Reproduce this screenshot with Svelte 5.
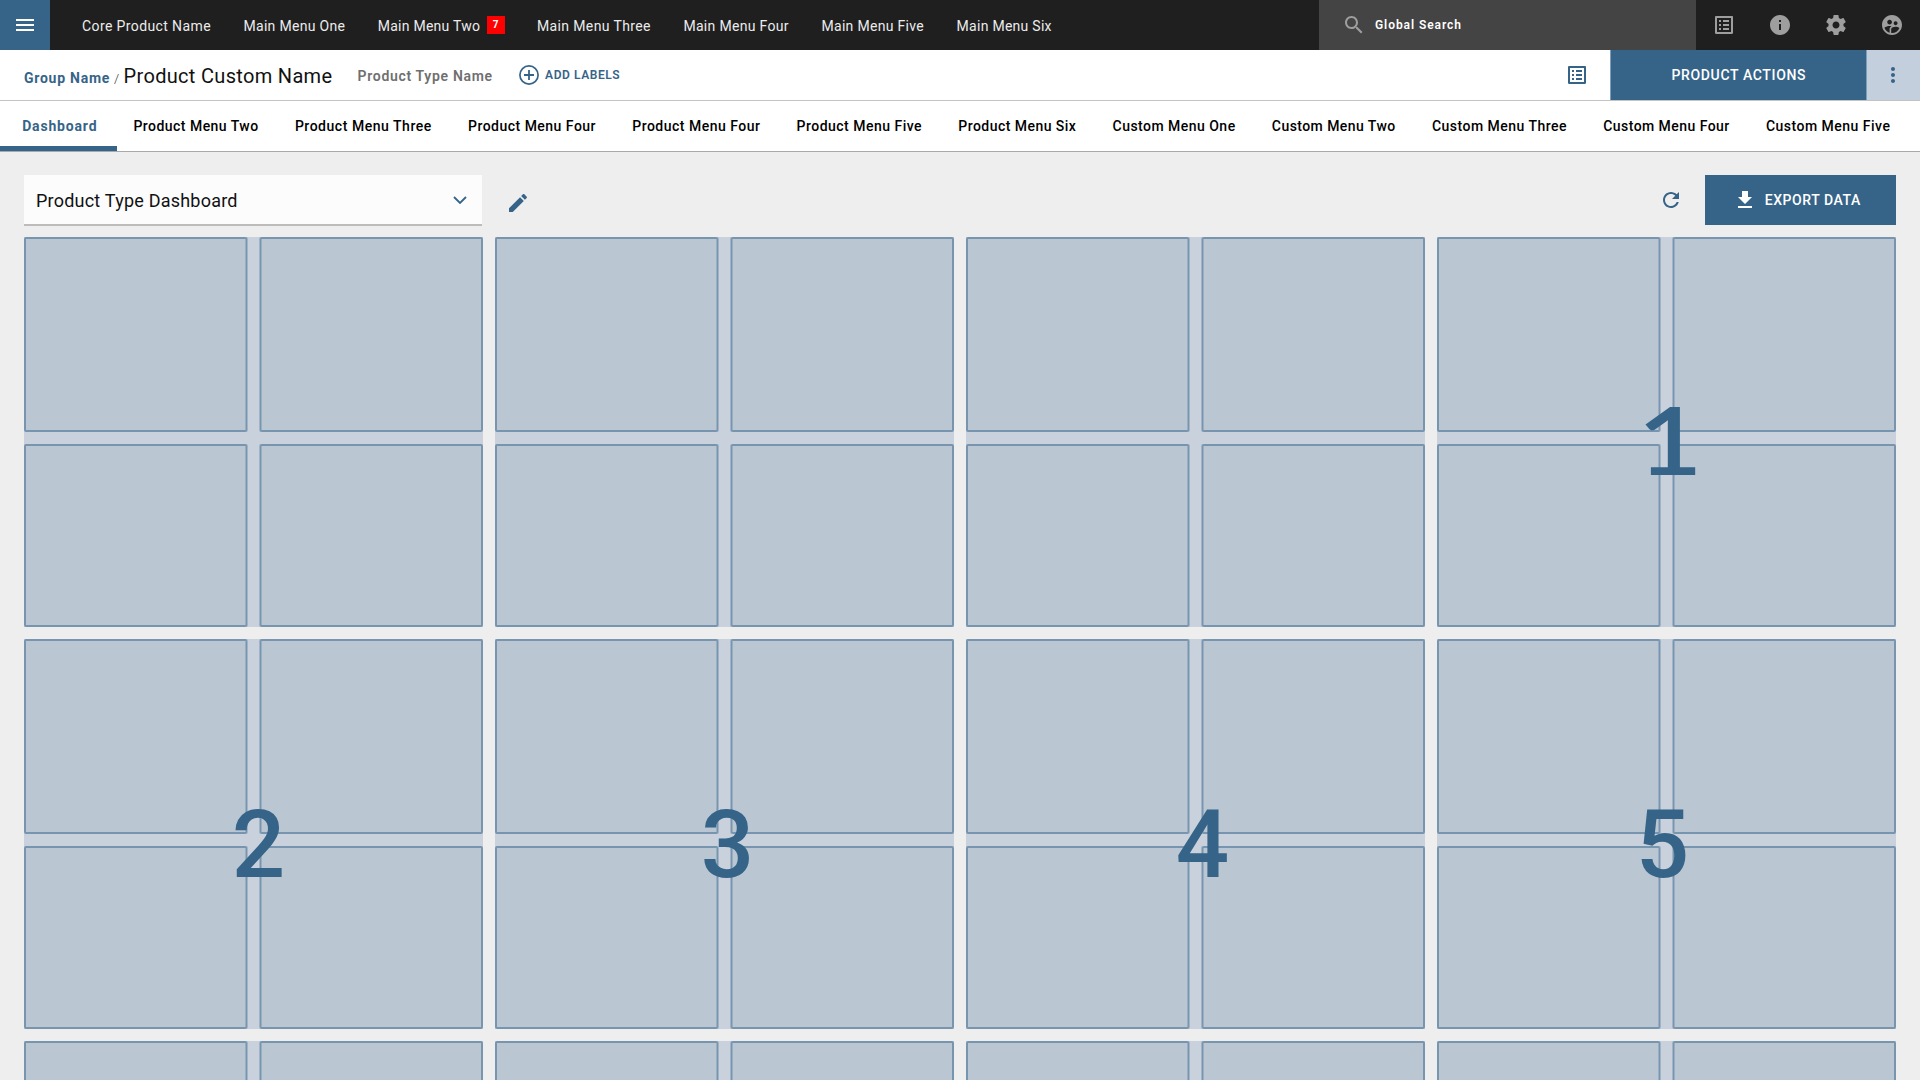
<script lang="ts">
  const mainMenu = [
    { label: 'Core Product Name', width: 128.6 },
    { label: 'Main Menu One', width: 101.4 },
    { label: 'Main Menu Two', width: 102.2, badge: '7' },
    { label: 'Main Menu Three', width: 113.6 },
    { label: 'Main Menu Four', width: 105.2 },
    { label: 'Main Menu Five', width: 102.2 },
    { label: 'Main Menu Six', width: 95 },
  ];

  const tabs = [
    { label: 'Dashboard', width: 74.4, active: true },
    { label: 'Product Menu Two', width: 124.8 },
    { label: 'Product Menu Three', width: 136.4 },
    { label: 'Product Menu Four', width: 127.6 },
    { label: 'Product Menu Four', width: 127.6 },
    { label: 'Product Menu Five', width: 125 },
    { label: 'Product Menu Six', width: 117.6 },
    { label: 'Custom Menu One', width: 122.6 },
    { label: 'Custom Menu Two', width: 123.4 },
    { label: 'Custom Menu Three', width: 134.6 },
    { label: 'Custom Menu Four', width: 126 },
    { label: 'Custom Menu Five', width: 124 },
  ];

  const groups = ['', '', '', '1', '2', '3', '4', '5', '', '', '', ''];

  // Tracks the label's letters out so the text fills the given width.
  function fit(node: HTMLElement, width: number) {
    const glyphs = (node.textContent ?? '').length;
    const natural = node.getBoundingClientRect().width;
    const spacing = (width - natural) / (glyphs - 1);
    node.style.letterSpacing = `${spacing}px`;
    node.style.marginRight = `${-spacing}px`;
  }
</script>

{#snippet listIcon()}
  <svg class="icon" viewBox="0 0 24 24"><path d="M19 5v14H5V5h14m1.1-2H3.9c-.5 0-.9.4-.9.9v16.2c0 .4.4.9.9.9h16.2c.4 0 .9-.5.9-.9V3.900c0-.5-.5-.9-.9-.9zM11 7h6v2h-6V7zm0 4h6v2h-6v-2zm0 4h6v2h-6zM7 7h2v2H7zm0 4h2v2H7zm0 4h2v2H7z" /></svg>
{/snippet}

<div class="page">
  <header class="topbar">
    <button class="burger" aria-label="Menu">
      <svg class="icon" viewBox="0 0 24 24"><path d="M3 18h18v-2H3v2zm0-5h18v-2H3v2zm0-7v2h18V6H3z" /></svg>
    </button>
    <nav class="main-menu">
      {#each mainMenu as item}
        <a class="main-item" href="#top">
          <span use:fit={item.width}>{item.label}</span>
          {#if item.badge}<b class="badge">{item.badge}</b>{/if}
        </a>
      {/each}
    </nav>
    <div class="search">
      <svg class="icon" viewBox="0 0 24 24"><path d="M15.5 14h-.79l-.28-.27C15.410 12.590 16 11.110 16 9.500 16 5.910 13.090 3 9.500 3S3 5.910 3 9.500 5.910 16 9.500 16c1.610 0 3.090-.59 4.230-1.570l.27.28v.79l5 4.990L20.490 19l-4.990-5zm-6 0C7.010 14 5 11.990 5 9.500S7.010 5 9.500 5 14 7.010 14 9.500 11.990 14 9.500 14z" /></svg>
      <span use:fit={86}>Global Search</span>
    </div>
    <div class="tools">
      {@render listIcon()}
      <svg class="icon" viewBox="0 0 24 24"><path d="M12 2C6.480 2 2 6.480 2 12s4.480 10 10 10 10-4.480 10-10S17.520 2 12 2zm1 15h-2v-6h2v6zm0-8h-2V7h2v2z" /></svg>
      <svg class="icon" viewBox="0 0 24 24"><path d="M19.430 12.980c.04-.32.07-.64.07-.98s-.03-.66-.07-.98l2.110-1.650c.19-.15.24-.42.12-.64l-2-3.460c-.12-.22-.39-.3-.61-.22l-2.490 1c-.52-.4-1.080-.73-1.690-.98l-.38-2.650C14.460 2.180 14.250 2 14 2h-4c-.25 0-.46.18-.49.42l-.38 2.650c-.61.25-1.170.59-1.690.98l-2.490-1c-.23-.09-.49 0-.61.22l-2 3.460c-.13.22-.07.49.12.64l2.110 1.650c-.04.32-.07.65-.07.98s.03.66.07.98l-2.110 1.650c-.19.15-.24.42-.12.64l2 3.460c.12.22.39.3.61.22l2.490-1c.52.4 1.080.73 1.690.98l.38 2.650c.03.24.24.42.49.42h4c.25 0 .46-.18.49-.42l.38-2.650c.61-.25 1.170-.59 1.690-.98l2.490 1c.23.09.49 0 .61-.22l2-3.460c.12-.22.07-.49-.12-.64l-2.110-1.650zM12 15.500c-1.930 0-3.500-1.570-3.500-3.500s1.570-3.500 3.500-3.500 3.500 1.570 3.500 3.500-1.570 3.500-3.500 3.500z" /></svg>
      <svg class="icon" viewBox="0 0 24 24"><path d="M11.990 2c-5.520 0-10 4.480-10 10s4.480 10 10 10 10-4.480 10-10-4.480-10-10-10zm3.610 6.340c1.070 0 1.930.86 1.930 1.930s-.86 1.930-1.930 1.930-1.930-.86-1.930-1.930c-.01-1.070.86-1.930 1.930-1.930zm-6-1.580c1.300 0 2.360 1.060 2.360 2.360s-1.060 2.360-2.360 2.360-2.360-1.060-2.360-2.360c0-1.310 1.050-2.360 2.360-2.360zm0 9.130v3.750c-2.400-.75-4.300-2.600-5.140-4.960 1.050-1.120 3.670-1.690 5.140-1.690.53 0 1.200.08 1.900.22-1.640.87-1.900 2.020-1.900 2.680zM11.990 20c-.27 0-.53-.01-.79-.04v-4.070c0-1.420 2.940-2.130 4.400-2.130 1.070 0 2.920.39 3.840 1.150C18.270 17.880 15.380 20 11.990 20z" /></svg>
    </div>
  </header>

  <section class="titlebar">
    <a class="group-name" href="#group"><span use:fit={85.4}>Group Name</span></a>
    <span class="slash">/</span>
    <h1><span use:fit={208.5}>Product Custom Name</span></h1>
    <span class="type-name"><span use:fit={134.5}>Product Type Name</span></span>
    <button class="add-labels">
      <svg class="icon" viewBox="0 0 24 24"><circle cx="12" cy="12" r="9.100" fill="none" stroke="currentColor" stroke-width="1.700" /><path d="M7 11.100h4.100V7h1.800v4.100H17v1.800h-4.100V17h-1.800v-4.100H7z" /></svg>
      <span use:fit={74.500}>ADD LABELS</span>
    </button>
    <div class="title-actions">
      {@render listIcon()}
      <button class="primary"><span use:fit={134}>PRODUCT ACTIONS</span></button>
      <button class="more" aria-label="More">
        <svg class="icon" viewBox="0 0 24 24"><path d="M12 8c1.100 0 2-.9 2-2s-.9-2-2-2-2 .9-2 2 .9 2 2 2zm0 2c-1.100 0-2 .9-2 2s.9 2 2 2 2-.9 2-2-.9-2-2-2zm0 6c-1.100 0-2 .9-2 2s.9 2 2 2 2-.9 2-2-.9-2-2-2z" /></svg>
      </button>
    </div>
  </section>

  <nav class="tabs">
    {#each tabs as tab}
      <a class="tab" class:active={tab.active} href="#tab"><span use:fit={tab.width}>{tab.label}</span></a>
    {/each}
  </nav>

  <main>
    <div class="controls">
      <div class="select">
        <span use:fit={201.5}>Product Type Dashboard</span>
        <svg class="chevron" viewBox="0 0 14 8"><path d="M1 1l6 6 6-6" /></svg>
      </div>
      <svg class="icon edit" viewBox="0 0 24 24"><path d="M3 17.250V21h3.750L17.810 9.940l-3.750-3.750L3 17.250zM20.710 7.040c.39-.39.39-1.020 0-1.410l-2.340-2.340c-.39-.39-1.020-.39-1.410 0l-1.830 1.830 3.750 3.750 1.830-1.830z" /></svg>
      <svg class="icon refresh" viewBox="0 0 24 24"><path d="M17.650 6.350C16.200 4.900 14.210 4 12 4c-4.420 0-7.990 3.580-7.990 8s3.570 8 7.990 8c3.730 0 6.840-2.550 7.730-6h-2.080c-.82 2.330-3.040 4-5.650 4-3.310 0-6-2.690-6-6s2.690-6 6-6c1.660 0 3.140.69 4.220 1.780L13 11h7V4l-2.350 2.350z" /></svg>
      <button class="export">
        <svg class="icon" viewBox="0 0 24 24"><path d="M19 9h-4V3H9v6H5l7 7 7-7zM5 18v2h14v-2H5z" /></svg>
        <span use:fit={95.5}>EXPORT DATA</span>
      </button>
    </div>

    <div class="board">
      {#each groups as number}
        <section class="group">
          <div class="cell left"></div>
          <div class="cell right"></div>
          <div class="cell left"></div>
          <div class="cell right"></div>
          {#if number}<strong class="number n{number}">{number}</strong>{/if}
        </section>
      {/each}
    </div>
  </main>
</div>

<style>
  :global(body) {
    overflow: hidden;
    background: #eee;
  }

  .page {
    display: flex;
    flex-direction: column;
    width: 1920px;
    height: 1080px;
    overflow: hidden;
    background: #eee;
    color: #111;
    font-family: Roboto, 'Noto Sans', sans-serif;
    font-size: 14px;
    white-space: nowrap;
    --blue: #366488;
  }

  a {
    color: inherit;
    text-decoration: none;
  }

  button {
    display: flex;
    align-items: center;
    justify-content: center;
    padding: 0;
    border: 0;
    background: none;
    color: inherit;
    font: inherit;
  }

  .icon {
    flex: none;
    width: 24px;
    height: 24px;
    fill: currentColor;
  }

  .topbar {
    display: flex;
    flex: none;
    height: 50px;
    background: #1f1f1f;
    color: #ececec;
  }

  .burger {
    width: 50px;
    height: 50px;
    background: var(--blue);
    color: #fff;
  }

  .main-menu {
    display: flex;
    flex: 1;
    align-items: center;
    gap: 32.900px;
    padding: 2px 0 0 32px;
  }

  .main-item {
    display: flex;
    align-items: center;
    gap: 6.500px;
  }

  .badge {
    width: 18px;
    height: 18px;
    margin: -2px -0.500px 0 0;
    background: #f00;
    color: #fff;
    font-size: 10px;
    line-height: 18px;
    text-align: center;
  }

  .search {
    display: flex;
    align-items: center;
    gap: 9px;
    width: 377px;
    padding-left: 23px;
    box-sizing: border-box;
    background: #444;
    color: #fff;
    font-size: 12px;
    font-weight: 600;
  }

  .search .icon {
    color: #9e9e9e;
  }

  .tools {
    display: flex;
    align-items: center;
    gap: 32px;
    width: 224px;
    padding: 0 0 0 16px;
    box-sizing: border-box;
    color: #9e9e9e;
  }

  .titlebar {
    display: flex;
    flex: none;
    height: 50px;
    align-items: baseline;
    padding-left: 24px;
    border-bottom: 1px solid #c4c4c4;
    background: #fff;
    line-height: 52px;
  }

  .group-name {
    color: var(--blue);
    font-weight: 700;
  }

  .slash {
    margin: 0 4.500px 0 4.500px;
    color: #333;
    font-size: 13px;
    font-weight: 300;
  }

  h1 {
    margin: 0;
    font-size: 20px;
    font-weight: 400;
  }

  .type-name {
    align-self: flex-start;
    margin-left: 25.500px;
    color: #6f6f6f;
    font-weight: 600;
    line-height: 53px;
  }

  .add-labels {
    gap: 4px;
    height: 50px;
    margin-left: 25px;
    align-self: flex-start;
    color: var(--blue);
    font-size: 12px;
    font-weight: 600;
  }

  .title-actions {
    display: flex;
    align-items: center;
    align-self: flex-start;
    height: 50px;
    margin-left: auto;
    color: var(--blue);
  }

  .primary {
    width: 257px;
    height: 50px;
    margin-left: 21px;
    box-sizing: border-box;
    border: solid #7f9db7;
    border-width: 0 1px;
    background: var(--blue);
    color: #fff;
    font-weight: 500;
  }

  .more {
    width: 53px;
    height: 50px;
    padding-right: 1px;
    box-sizing: border-box;
    background: #c3cfdc;
  }

  .tabs {
    display: flex;
    flex: none;
    height: 50px;
    border-bottom: 1px solid #a9a9a9;
    background: #fff;
    font-weight: 500;
  }

  .tab {
    padding: 0 15.500px 0 21.200px;
    border-bottom: 5px solid transparent;
    color: #000;
    line-height: 51px;
    height: 45px;
  }

  .tab.active {
    padding-left: 22.200px;
    padding-right: 20.300px;
    border-color: var(--blue);
    color: var(--blue);
    font-weight: 700;
  }

  .tab.active + .tab {
    padding-left: 16.500px;
  }

  main {
    padding: 22px 24px 0;
  }

  .controls {
    display: flex;
    height: 63px;
    align-items: flex-start;
    color: var(--blue);
  }

  .select {
    display: flex;
    align-items: center;
    justify-content: space-between;
    width: 458px;
    height: 51px;
    margin-top: 1px;
    padding: 2px 15px 0 12px;
    box-sizing: border-box;
    border-bottom: 2px solid #bcbcbc;
    background: #fcfcfc;
    color: #111;
    font-size: 18px;
  }

  .chevron {
    width: 14px;
    height: 8px;
    margin-top: -2px;
    fill: none;
    stroke: var(--blue);
    stroke-width: 1.800;
  }

  .edit {
    margin: 17px 0 0 24px;
  }

  .refresh {
    margin: 14px 22px 0 auto;
  }

  .export {
    width: 191px;
    height: 50px;
    margin-top: 1px;
    padding-right: 8px;
    gap: 8px;
    box-sizing: border-box;
    background: var(--blue);
    color: #fff;
    font-weight: 500;
  }

  .board {
    display: grid;
    grid-template-columns: repeat(4, 459px);
    grid-auto-rows: 390px;
    gap: 12px;
  }

  .group {
    position: relative;
    display: grid;
    grid-template-columns: 223px 223px;
    grid-template-rows: 195px 183px;
    gap: 12px 13px;
    background: #c9d1dc;
  }

  .cell {
    border: 2px solid #7895b0;
    border-radius: 2px;
    background: #bac6d2;
  }

  /* The inner edges are softened by a half-tone line on either side. */
  .left {
    border-right-width: 1px;
    box-shadow: 1px 0 0 #a1b3c6, inset -1px 0 0 #99aec1;
  }

  .right {
    border-left-width: 1px;
    box-shadow: -1px 0 0 #a1b3c6, inset 1px 0 0 #99aec1;
  }

  .number {
    position: absolute;
    top: 159px;
    left: 50%;
    width: 60px;
    margin-left: -27px;
    color: var(--blue);
    font-size: 94px;
    font-weight: 500;
    line-height: 94px;
    text-align: center;
  }

  .n1 {
    top: 155px;
    margin-left: -27px;
    font-family: Lato, sans-serif;
    font-weight: 600;
    transform: scaleX(1.2);
  }

  .n2 {
    margin-left: -25px;
  }

  .n4 {
    margin-left: -23px;
  }

  .n5 {
    margin-left: -34px;
  }
</style>
